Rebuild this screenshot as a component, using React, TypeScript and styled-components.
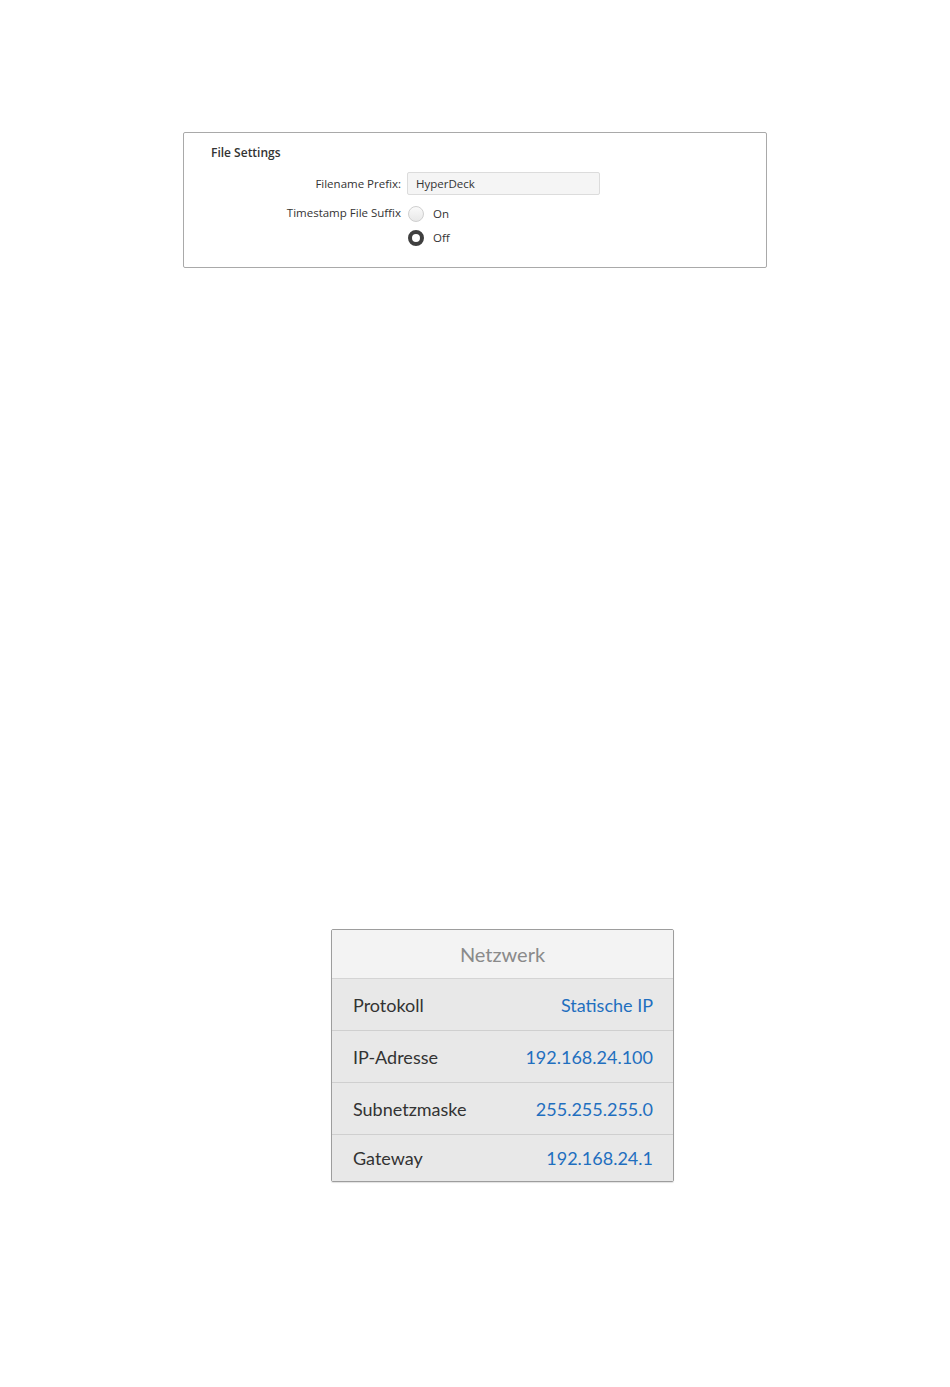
import styled, { createGlobalStyle } from 'styled-components';

const GlobalStyle = createGlobalStyle`
  html, body {
    margin: 0;
    padding: 0;
    background: #ffffff;
  }
`;

const network = [
  { label: 'Protokoll', value: 'Statische IP' },
  { label: 'IP-Adresse', value: '192.168.24.100' },
  { label: 'Subnetzmaske', value: '255.255.255.0' },
  { label: 'Gateway', value: '192.168.24.1' },
];

export default function App() {
  return (
    <Page>
      <GlobalStyle />
      <SettingsBox>
        <SettingsTitle>File Settings</SettingsTitle>
        <SettingsGrid>
          <FieldLabel>Filename Prefix:</FieldLabel>
          <TextField>HyperDeck</TextField>
          <FieldLabel>Timestamp File Suffix</FieldLabel>
          <RadioGroup>
            <RadioOption>
              <Radio />
              On
            </RadioOption>
            <RadioOption>
              <Radio checked />
              Off
            </RadioOption>
          </RadioGroup>
        </SettingsGrid>
      </SettingsBox>

      <NetworkPanel>
        <NetworkHeader>Netzwerk</NetworkHeader>
        {network.map((row) => (
          <NetworkRow key={row.label}>
            <span>{row.label}</span>
            <NetworkValue>{row.value}</NetworkValue>
          </NetworkRow>
        ))}
      </NetworkPanel>
    </Page>
  );
}

const Page = styled.div`
  width: 950px;
  height: 1387px;
  padding-top: 132px;
  box-sizing: border-box;
`;

const SettingsBox = styled.section`
  margin-left: 183px;
  width: 584px;
  height: 136px;
  box-sizing: border-box;
  border: 1px solid #a9a9a9;
  border-radius: 2px;
  padding-top: 12px;
  font-family: 'Open Sans', sans-serif;
  font-size: 11.5px;
  color: #333;
`;

const SettingsTitle = styled.h2`
  margin: 0 0 11px 27px;
  font-size: 12px;
  font-weight: 600;
  line-height: 16px;
  color: #333;
`;

const SettingsGrid = styled.div`
  display: grid;
  grid-template-columns: 217px auto;
  column-gap: 6px;
  row-gap: 6px;
  align-items: start;
`;

const FieldLabel = styled.div`
  text-align: right;
  line-height: 23px;
  white-space: nowrap;
`;

const TextField = styled.div`
  width: 193px;
  height: 23px;
  box-sizing: border-box;
  border: 1px solid #dcdcdc;
  border-radius: 2px;
  background: #f5f5f5;
  padding-left: 8px;
  line-height: 21px;
`;

const RadioGroup = styled.div`
  display: flex;
  flex-direction: column;
  gap: 5px;
  padding-top: 3px;
`;

const RadioOption = styled.label`
  display: flex;
  align-items: center;
  gap: 9px;
  height: 19px;
  padding-left: 1px;
`;

const Radio = styled.span<{ checked?: boolean }>`
  width: 16px;
  height: 16px;
  box-sizing: border-box;
  border-radius: 50%;
  border: ${(p) => (p.checked ? '4px solid #3f3f3f' : '1px solid #cfcfcf')};
  background: ${(p) => (p.checked ? '#ffffff' : 'linear-gradient(#fafafa, #e8e8e8)')};
`;

const NetworkPanel = styled.section`
  margin: 661px 0 0 331px;
  width: 343px;
  box-sizing: border-box;
  border: 1px solid #9d9d9d;
  border-radius: 2px;
  font-family: Lato, sans-serif;
  font-size: 18px;
  overflow: hidden;
  box-shadow: 0 1px 1px rgba(0, 0, 0, 0.12);
`;

const NetworkHeader = styled.div`
  height: 48px;
  line-height: 48px;
  text-align: center;
  font-size: 20px;
  background: #f3f3f3;
  color: #8a8a8a;
  border-bottom: 1px solid #d4d4d4;
`;

const NetworkRow = styled.div`
  display: flex;
  justify-content: space-between;
  align-items: center;
  height: 51px;
  padding: 0 20px 0 21px;
  background: #e8e8e8;
  color: #333;
  border-bottom: 1px solid #cfcfcf;

  &:last-child {
    border-bottom: none;
    height: 46px;
  }
`;

const NetworkValue = styled.span`
  color: #1f6fbf;
`;
